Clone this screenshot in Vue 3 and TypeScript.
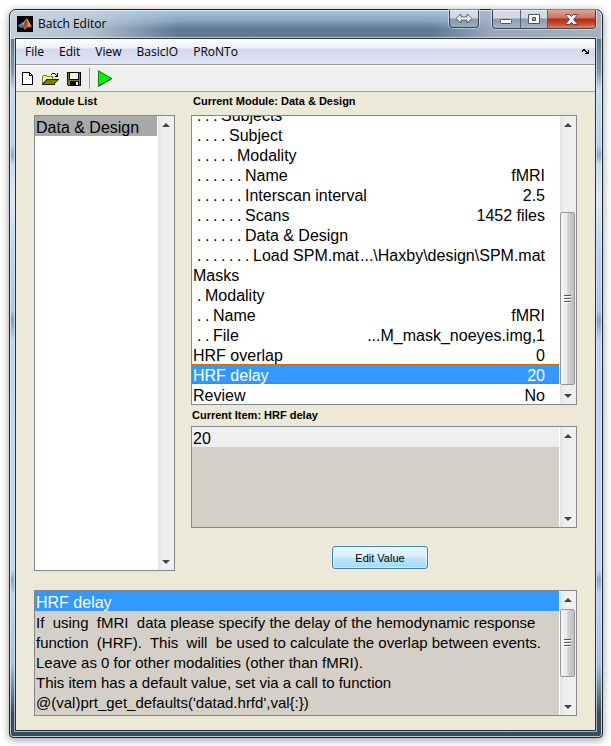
<script setup lang="ts">
import { ref } from 'vue'

interface ModuleRow {
  level: number
  name: string
  value?: string
}

interface Track {
  before: number
  thumb: number
  after: number
}

const menus: string[] = ['File', 'Edit', 'View', 'BasicIO', 'PRoNTo']

const rows: ModuleRow[] = [
  { level: 3, name: 'Subjects' },
  { level: 4, name: 'Subject' },
  { level: 5, name: 'Modality' },
  { level: 6, name: 'Name', value: 'fMRI' },
  { level: 6, name: 'Interscan interval', value: '2.5' },
  { level: 6, name: 'Scans', value: '1452 files' },
  { level: 6, name: 'Data & Design' },
  { level: 7, name: 'Load SPM.mat', value: '...\\Haxby\\design\\SPM.mat' },
  { level: 0, name: 'Masks' },
  { level: 1, name: 'Modality' },
  { level: 2, name: 'Name', value: 'fMRI' },
  { level: 2, name: 'File', value: '...M_mask_noeyes.img,1' },
  { level: 0, name: 'HRF overlap', value: '0' },
  { level: 0, name: 'HRF delay', value: '20' },
  { level: 0, name: 'Review', value: 'No' },
]

const selected = ref(13)

const help: string[] = [
  'If  using  fMRI  data please specify the delay of the hemodynamic response',
  'function  (HRF).  This  will  be used to calculate the overlap between events.',
  'Leave as 0 for other modalities (other than fMRI).',
  'This item has a default value, set via a call to function',
  "@(val)prt_get_defaults('datad.hrfd',val{:})",
]

const moduleTrack: Track = { before: 80, thumb: 172, after: 2 }
const helpTrack: Track = { before: 1, thumb: 67, after: 22 }
</script>

<template>
  <main class="window">
    <header class="titlebar">
      <svg class="logo" viewBox="0 0 16 16" aria-hidden="true">
        <rect width="16" height="16" fill="#060504" />
        <path d="M.5 9.500L5 7l2 2-3 3z" fill="#3a8fb5" />
        <path d="M5 7c2-.5 3-3 4.500-5L7.500 9l-1 1z" fill="#6cc0d6" />
        <path d="M4 12l2.500-3 3-7c1 0 2.500 5 2.500 9H9.500l-2 3c-1-2-2-2.500-3.500-2z" fill="#b8391a" />
        <path d="M9.500 2c1.500 1 3.500 6 6 10-1.500-1.500-3-1.500-4-.5z" fill="#f39a3c" />
        <path d="M7.500 14c1-1 1.500-3 4-2.500l-1-5c-1 3-2 5-3.500 5.500z" fill="#dd6325" />
      </svg>
      <h1 class="caption">Batch Editor</h1>
      <button class="cap swap" type="button" aria-label="Switch display">
        <svg width="18" height="11" viewBox="0 0 18 11">
          <path d="M1 5.500L6 1v3h6V1l5 4.500L12 10V7H6v3z" fill="#fff" stroke="#56616d" />
        </svg>
      </button>
      <div class="cap-group">
        <button class="cap min" type="button" aria-label="Minimize">
          <svg width="13" height="12" viewBox="0 0 13 12">
            <rect x=".5" y="6.500" width="11" height="4" rx="1" fill="#fff" stroke="#4c5562" />
          </svg>
        </button>
        <button class="cap max" type="button" aria-label="Maximize">
          <svg width="12" height="11" viewBox="0 0 12 11">
            <path d="M.5.5h11v9H.5z M4.500 3.500v3h3v-3z" fill="#fff" fill-rule="evenodd" stroke="#4c5562" />
          </svg>
        </button>
        <button class="cap close" type="button" aria-label="Close">
          <svg width="13" height="11" viewBox="0 0 13 11">
            <path d="M1 .5h3.500l2 2 2-2H12v1L8.500 5.500 12 9.500v1H8.500l-2-2-2 2H1v-1l3.500-4L1 1.500z" fill="#fff" stroke="#5a4048" />
          </svg>
        </button>
      </div>
    </header>

    <div class="client">
      <nav class="menubar">
        <button v-for="m in menus" :key="m" class="menu" type="button">{{ m }}</button>
        <button class="dock" type="button" aria-label="Dock">
          <svg width="8" height="6" viewBox="0 0 8 6" shape-rendering="crispEdges">
            <path d="M0 1h1V0h2v1h1v1h1v1h1V1h1v4H3V4h1V3H3V2H1v1H0z" fill="#000" />
          </svg>
        </button>
      </nav>

      <div class="toolbar">
        <button class="tool" type="button" aria-label="New">
          <svg width="12" height="13" viewBox="0 0 12 13" shape-rendering="crispEdges">
            <path d="M.5.5h7l3 3v9H.5z" fill="#fff" stroke="#000" />
            <path d="M7.500.5v3h3" fill="none" stroke="#000" />
          </svg>
        </button>
        <button class="tool" type="button" aria-label="Open">
          <svg width="17" height="14" viewBox="0 0 17 14" shape-rendering="crispEdges">
            <path d="M9 2h1V1h3v1h1v1h1V1h1v4h-3V4h1V3h-1V2h-3v1H9z" fill="#000" />
            <path d="M.5 12.500v-8l1-1h3l1 1h5v3h-6z" fill="#ffffa0" stroke="#808000" />
            <path d="M1 12.500l4-5h11l-4 5z" fill="#808000" stroke="#202000" />
          </svg>
        </button>
        <button class="tool" type="button" aria-label="Save">
          <svg width="14" height="14" viewBox="0 0 14 14" shape-rendering="crispEdges">
            <path d="M.5.5h13v13h-12l-1-1z" fill="#808000" stroke="#000" />
            <rect x="3" y="1" width="8" height="6" fill="#f0f0f0" />
            <path d="M2.500 1v6.500h9V1" fill="none" stroke="#000" />
            <rect x="3" y="9" width="9" height="5" fill="#000" />
            <rect x="9" y="10" width="2" height="3" fill="#f0f0f0" />
          </svg>
        </button>
        <span class="sep"></span>
        <button class="tool" type="button" aria-label="Run">
          <svg width="15" height="17" viewBox="0 0 15 17">
            <path d="M.5.8L13.800 8.500.5 16.200z" fill="#00f000" stroke="#0a8a0a" />
            <path d="M.5 16.200L13.800 8.500" stroke="#044a04" />
          </svg>
        </button>
      </div>

      <div class="content">
        <section class="modules">
          <h2 id="modules-label" class="label top">Module List</h2>
          <div class="box white grow">
            <ul class="list" role="listbox" aria-labelledby="modules-label">
              <li class="row picked" role="option" aria-selected="true">Data &amp; Design</li>
            </ul>
            <div class="scroll">
              <button class="arrow up" type="button" aria-label="Scroll up"></button>
              <button class="arrow down" type="button" aria-label="Scroll down"></button>
            </div>
          </div>
        </section>

        <section class="current">
          <h2 id="current-label" class="label top">Current Module: Data &amp; Design</h2>
          <div class="box white tall">
            <ul class="list end" role="listbox" aria-labelledby="current-label">
              <li
                v-for="(r, i) in rows"
                :key="i"
                class="row"
                :class="{ active: i === selected }"
                role="option"
                :aria-selected="i === selected"
                @click="selected = i"
              >
                <span v-if="r.level" class="dots"><span v-for="n in r.level" :key="n" class="dot">.</span></span>
                <span>{{ r.name }}</span>
                <span class="value">{{ r.value }}</span>
              </li>
            </ul>
            <div class="scroll">
              <button class="arrow up" type="button" aria-label="Scroll up"></button>
              <div class="track">
                <span :style="{ flexGrow: moduleTrack.before }"></span>
                <span class="thumb" :style="{ flexGrow: moduleTrack.thumb }"><i class="grip"></i></span>
                <span :style="{ flexGrow: moduleTrack.after }"></span>
              </div>
              <button class="arrow down" type="button" aria-label="Scroll down"></button>
            </div>
          </div>

          <h2 id="item-label" class="label">Current Item: HRF delay</h2>
          <div class="box short">
            <ul class="list" role="listbox" aria-labelledby="item-label">
              <li class="row pale" role="option" aria-selected="true">20</li>
            </ul>
            <div class="scroll">
              <button class="arrow up" type="button" aria-label="Scroll up"></button>
              <button class="arrow down" type="button" aria-label="Scroll down"></button>
            </div>
          </div>

          <div class="actions">
            <button class="edit" type="button">Edit Value</button>
          </div>
        </section>

        <section class="box help">
          <ul class="list">
            <li class="row headline">HRF delay</li>
            <li v-for="line in help" :key="line" class="row prose">{{ line }}</li>
          </ul>
          <div class="scroll">
            <button class="arrow up" type="button" aria-label="Scroll up"></button>
            <div class="track">
              <span :style="{ flexGrow: helpTrack.before }"></span>
              <span class="thumb" :style="{ flexGrow: helpTrack.thumb }"><i class="grip"></i></span>
              <span :style="{ flexGrow: helpTrack.after }"></span>
            </div>
            <button class="arrow down" type="button" aria-label="Scroll down"></button>
          </div>
        </section>
      </div>
    </div>
  </main>
</template>

<style>
body {
  background: #fff;
}
#app {
  padding: 9px 8px 8px 9px;
}
</style>

<style scoped>
* {
  box-sizing: border-box;
}
h1,
h2,
ul {
  margin: 0;
  padding: 0;
  list-style: none;
  font-weight: normal;
}
button {
  margin: 0;
  padding: 0;
  border: 0;
  background: none;
  font: inherit;
  color: inherit;
}
svg {
  display: block;
}
.window {
  display: flex;
  flex-direction: column;
  min-height: calc(100vh - 17px);
  padding: 0 6px 6px 5px;
  border: 1px solid #1a2530;
  border-radius: 7px 7px 4px 4px;
  background:
    linear-gradient(90deg, rgba(205, 214, 222, 0.9) 0, rgba(200, 211, 221, 0.8) 80px, rgba(160, 185, 208, 0) 170px) 0 0 / 100% 29px no-repeat,
    linear-gradient(90deg, transparent 420px, rgba(172, 182, 198, 0.75) 480px, #a6b0be) 0 0 / 100% 29px no-repeat,
    linear-gradient(#a8c6e2, #85a3c0 11px, #5b7791 19px, #607b94 28px, #8496a8 62px, #c5daf0 80px, #b4d0ec 135px, #8fa9c4 145px, #c4dcf4 155px, #d8e9f9 190px, #b5d5f5 240px, #a9c8e6 300px, #83a0bd 310px, #b5d5f5 330px, #b8d8f8 560px, #8aa7c4 570px, #b5d5f5 585px, #a3bfdd 655px, #35495b 705px, #3a4d60);
  box-shadow:
    inset 0 0 0 1px rgba(235, 245, 255, 0.75),
    0 2px 9px rgba(0, 0, 0, 0.4);
  font-family: 'Open Sans', 'Noto Sans', sans-serif;
  font-size: 12px;
  color: #000;
}
.titlebar {
  display: flex;
  align-items: flex-start;
  height: 28px;
  padding-left: 2px;
}
.logo {
  width: 16px;
  height: 16px;
  margin-top: 6px;
}
.caption {
  flex: 1;
  padding-left: 5px;
  font-size: 12px;
  line-height: 28px;
}
.cap {
  display: flex;
  align-items: center;
  justify-content: center;
  height: 18px;
  background: linear-gradient(rgba(255, 255, 255, 0.5) 8px, rgba(90, 110, 130, 0.35) 9px, rgba(170, 190, 205, 0.6));
}
.swap {
  width: 30px;
  margin-right: 13px;
  border: 1px solid #38444f;
  border-top: 0;
  border-radius: 0 0 4px 4px;
  box-shadow: 0 0 0 1px rgba(255, 255, 255, 0.45);
}
.cap-group {
  display: flex;
  overflow: hidden;
  border: 1px solid #38444f;
  border-top: 0;
  border-radius: 0 0 4px 4px;
  box-shadow: 0 0 0 1px rgba(255, 255, 255, 0.45);
}
.min {
  width: 28px;
  border-right: 1px solid #56606b;
}
.max {
  width: 27px;
  border-right: 1px solid #56606b;
}
.close {
  width: 47px;
  background: linear-gradient(#dea596, #cd7562 8px, #b02c14 9px, #c94a2c 14px, #df8566);
}
.client {
  display: flex;
  flex-direction: column;
  flex: 1;
  border: 1px solid #24303c;
  background: #ece9d8;
  box-shadow: 0 0 0 1px rgba(225, 238, 250, 0.65);
}
.menubar {
  display: flex;
  align-items: center;
  gap: 15px;
  height: 26px;
  padding: 0 5px 0 9px;
  border-bottom: 1px solid #9a9a9a;
  background: linear-gradient(#fff, #eceff7 9px, #d4daed 10px, #dee4f4);
}
.menu {
  line-height: 24px;
}
.dock {
  margin-left: auto;
}
.toolbar {
  display: flex;
  align-items: center;
  gap: 8px;
  height: 27px;
  padding: 0 6px;
  border-top: 1px solid #fff;
  border-bottom: 1px solid #9a9a9a;
  background: #efefef;
}
.sep {
  width: 1px;
  height: 21px;
  background: #a0a0a0;
}
.content {
  display: grid;
  flex: 1;
  grid-template-columns: minmax(0, 141fr) minmax(0, 386fr);
  grid-template-rows: 1fr auto;
  gap: 19px 16px;
  padding: 0 18px 14px;
  font-family: 'Liberation Sans', Arial, sans-serif;
}
.modules,
.current {
  display: flex;
  flex-direction: column;
}
.label {
  padding-left: 1px;
  font-size: 11px;
  font-weight: bold;
  line-height: 21px;
}
.top {
  padding-bottom: 5px;
  padding-left: 2px;
  line-height: 18px;
}
.box {
  display: flex;
  border: 1px solid #828790;
  background: #d4d0c8;
  font-size: 16px;
}
.white {
  background: #fff;
}
.grow {
  flex: 1;
}
.tall {
  height: 290px;
}
.short {
  height: 102px;
}
.list {
  display: flex;
  flex: 1;
  flex-direction: column;
  min-width: 0;
  overflow: hidden;
}
.end {
  justify-content: flex-end;
}
.row {
  display: flex;
  flex: none;
  height: 20px;
  padding-left: 1px;
  line-height: 24px;
  white-space: pre;
}
.prose {
  font-size: 15px;
}
.picked {
  background: #a9a9a9;
}
.pale {
  background: #efefef;
}
.headline,
.active {
  background: #3399ff;
  color: #fff;
}
.active {
  padding-left: 0;
  border: 1px dotted #cc6600;
  line-height: 22px;
}
.dots {
  display: flex;
  padding-left: 4px;
}
.dot {
  width: 8px;
}
.value {
  margin-left: auto;
  padding-right: 14px;
}
.active .value {
  padding-right: 13px;
}
.scroll {
  display: flex;
  flex: none;
  flex-direction: column;
  justify-content: space-between;
  width: 17px;
  border-left: 1px solid #fff;
  background: linear-gradient(90deg, #e3e3e3, #efefef 5px, #f0f0f0);
}
.arrow {
  display: flex;
  align-items: center;
  justify-content: center;
  height: 17px;
}
.arrow::before {
  content: '';
  border: 4px solid transparent;
}
.up::before {
  border-top-width: 0;
  border-bottom-color: #444;
}
.down::before {
  border-bottom-width: 0;
  border-top-color: #444;
}
.track {
  display: flex;
  flex: 1;
  flex-direction: column;
}
.track > span {
  flex-basis: 0;
}
.thumb {
  display: flex;
  align-items: center;
  justify-content: center;
  width: 15px;
  border: 1px solid #959595;
  border-radius: 2px;
  background: linear-gradient(90deg, #f5f5f5, #e9e9eb 6px, #d0d1d5 7px, #bfc0c5);
}
.grip {
  width: 7px;
  height: 8px;
  background: repeating-linear-gradient(#555 0 1px, #fff 1px 2px, transparent 2px 3px);
}
.actions {
  display: flex;
  justify-content: center;
  padding: 18px 8px 2px 0;
}
.edit {
  width: 96px;
  height: 23px;
  border: 1px solid #3c7fb1;
  border-radius: 3px;
  background: linear-gradient(#eaf6fd, #d9f0fc 10px, #bee6fd 11px, #a7d9f5);
  box-shadow:
    inset 0 0 0 1px rgba(255, 255, 255, 0.5),
    0 0 0 1px rgba(255, 255, 255, 0.4);
  font-size: 11px;
}
.help {
  grid-column: 1 / -1;
  height: 126px;
}
</style>
